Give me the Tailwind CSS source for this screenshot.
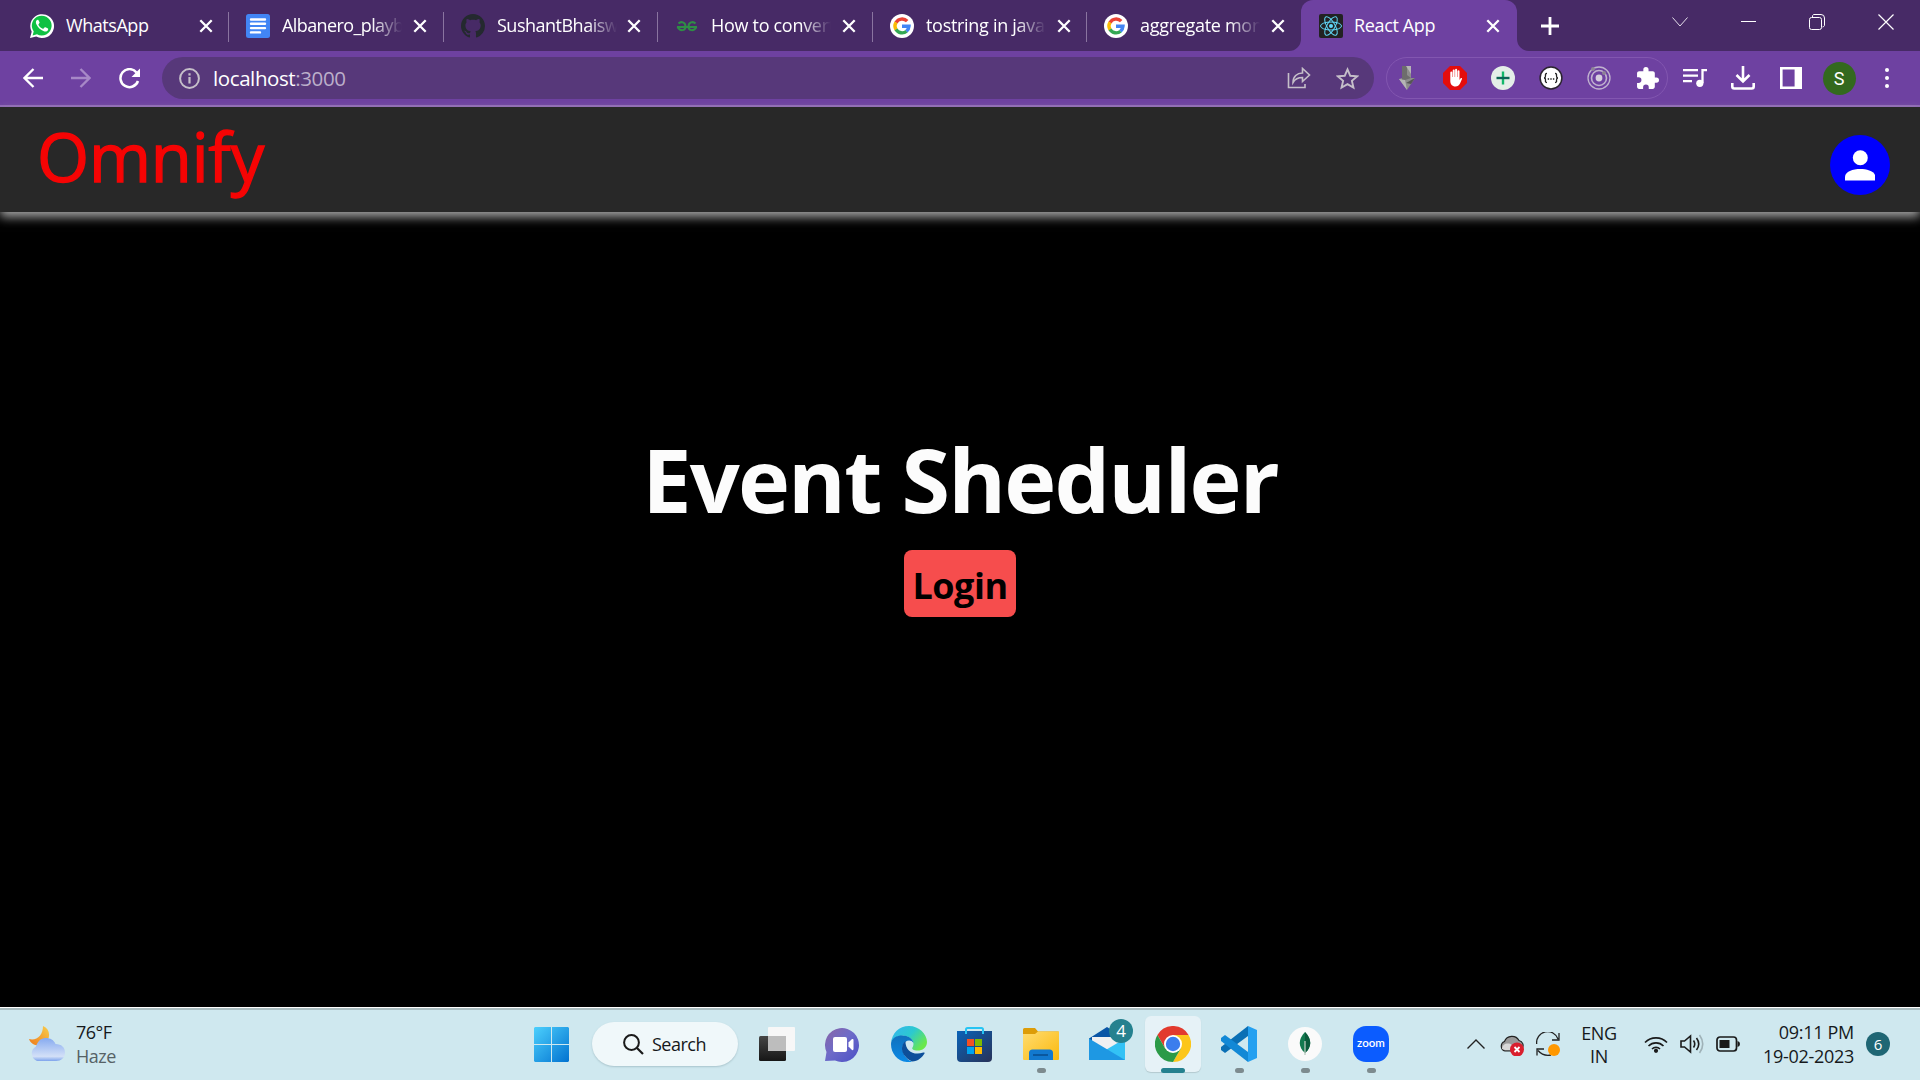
<!DOCTYPE html>
<html lang="en">
<head>
<meta charset="utf-8">
<title>React App</title>
<script src="https://cdn.jsdelivr.net/npm/@tailwindcss/browser@4"></script>
</head>
<body class="w-[1920px] h-[1080px] overflow-hidden bg-black font-['Open_Sans','Noto_Sans',sans-serif] flex flex-col">
<svg class="hidden">
  <symbol id="x" viewBox="0 0 14 14"><path d="M1.3 1.3 12.7 12.7M12.7 1.3 1.3 12.7" stroke="#fff" stroke-width="2.3"/></symbol>
  <symbol id="google" viewBox="0 0 24 24"><circle cx="12" cy="12" r="12" fill="#fff"/><g fill="none" stroke-width="3.4"><path d="M17.2 7.2A7 7 0 0 0 6 8.6" stroke="#ea4335"/><path d="M6 8.4a7 7 0 0 0 0 7.2" stroke="#fbbc05"/><path d="M6 15.4a7 7 0 0 0 10.6 1.8" stroke="#34a853"/><path d="M12 12.2h7a7 7 0 0 1-2.5 5" stroke="#4285f4"/></g></symbol>
</svg>

<!-- Tab strip -->
<div class="h-[51px] shrink-0 bg-[#472a66] flex text-white text-[18px] leading-[24px]">
  <div class="w-[14px] shrink-0"></div>
  <div class="w-[215px] shrink-0 flex items-center pl-4 relative border-r-0">
    <svg class="size-6 shrink-0" viewBox="0 0 24 24"><path d="M0 24l1.7-6.2A11.9 11.9 0 1 1 6.2 22.4z" fill="#fff"/><path d="M2.6 21.4l1.1-4A9.9 9.9 0 1 1 7 20.300z" fill="#0fc143"/><path d="M8.500 6.200c-.5-.8-1.200-.6-1.800 0-1 1-1 2.500-.3 4 1.400 3 4 5.700 7.500 7 1.900.7 3.800 0 4.200-1.500.2-.9.100-1-.6-1.400l-2-1c-.4-.2-.7-.1-1 .2l-.9 1.100c-.3.300-.5.300-.9.100-1.900-.8-3.200-2-4.200-3.800-.2-.4-.1-.6.200-.9l.7-.9c.2-.3.200-.5.100-.8z" fill="#fff"/></svg>
    <span class="ml-3 w-[121px] pb-0.5 overflow-hidden whitespace-nowrap tracking-[-0.45px]">WhatsApp</span>
    <svg class="size-[14px] ml-3"><use href="#x"/></svg>
    <i class="absolute right-0 top-3 h-[30px] w-px bg-[#8a74a0]"></i>
  </div>
  <div class="w-[215px] shrink-0 flex items-center pl-[17px] relative">
    <svg class="size-6 shrink-0" viewBox="0 0 24 24"><rect width="24" height="24" rx="2.500" fill="#4285f4"/><path d="M5 5.500h14M5 9.800h14M5 14.100h14M5 18.400h9" stroke="#fff" stroke-width="2.400" stroke-linecap="round"/></svg>
    <span class="ml-3 w-[120px] pb-0.5 overflow-hidden whitespace-nowrap tracking-[-0.6px] mask-r-from-75% mask-r-to-100%">Albanero_playbook</span>
    <svg class="size-[14px] ml-[11px]"><use href="#x"/></svg>
    <i class="absolute right-0 top-3 h-[30px] w-px bg-[#8a74a0]"></i>
  </div>
  <div class="w-[214px] shrink-0 flex items-center pl-[17px] relative">
    <svg class="size-6 shrink-0" viewBox="0 0 16 16"><path fill="#24292f" d="M8 0C3.580 0 0 3.580 0 8c0 3.540 2.290 6.530 5.470 7.590.4.070.55-.17.55-.38 0-.19-.01-.82-.01-1.490-2.010.37-2.530-.49-2.690-.94-.09-.23-.48-.94-.82-1.130-.28-.15-.68-.52-.01-.53.63-.01 1.080.58 1.230.82.72 1.210 1.870.87 2.330.66.07-.52.28-.87.51-1.070-1.780-.2-3.640-.89-3.640-3.950 0-.87.31-1.590.82-2.150-.08-.2-.36-1.020.08-2.120 0 0 .67-.21 2.200.82.64-.18 1.320-.27 2-.27s1.360.09 2 .27c1.530-1.040 2.200-.82 2.200-.82.44 1.100.16 1.920.08 2.120.51.56.82 1.270.82 2.150 0 3.070-1.870 3.750-3.650 3.950.29.25.54.73.54 1.480 0 1.070-.01 1.930-.01 2.200 0 .21.15.46.55.38A8.010 8.010 0 0 0 16 8c0-4.420-3.580-8-8-8z"/></svg>
    <span class="ml-3 w-[120px] pb-0.5 overflow-hidden whitespace-nowrap tracking-[-0.5px] mask-r-from-75% mask-r-to-100%">SushantBhaiswar</span>
    <svg class="size-[14px] ml-[10px]"><use href="#x"/></svg>
    <i class="absolute right-0 top-3 h-[30px] w-px bg-[#8a74a0]"></i>
  </div>
  <div class="w-[215px] shrink-0 flex items-center pl-[17px] relative">
    <svg class="size-6 shrink-0" viewBox="0 0 24 24" fill="none" stroke="#2f8d46" stroke-width="2"><path d="M2 13h20M3.500 9.500C6 7 10.500 8 10.500 12.500S5 17.500 2.500 13M20.500 9.500C18 7 13.500 8 13.500 12.500s5.500 5 8 .5"/></svg>
    <span class="ml-3 w-[120px] pb-0.5 overflow-hidden whitespace-nowrap tracking-[-0.3px] mask-r-from-75% mask-r-to-100%">How to convert</span>
    <svg class="size-[14px] ml-[11px]"><use href="#x"/></svg>
    <i class="absolute right-0 top-3 h-[30px] w-px bg-[#8a74a0]"></i>
  </div>
  <div class="w-[214px] shrink-0 flex items-center pl-[17px] relative">
    <svg class="size-6 shrink-0"><use href="#google"/></svg>
    <span class="ml-3 w-[120px] pb-0.5 overflow-hidden whitespace-nowrap tracking-[-0.3px] mask-r-from-75% mask-r-to-100%">tostring in javascript</span>
    <svg class="size-[14px] ml-[11px]"><use href="#x"/></svg>
    <i class="absolute right-0 top-3 h-[30px] w-px bg-[#8a74a0]"></i>
  </div>
  <div class="w-[214px] shrink-0 flex items-center pl-[17px] relative">
    <svg class="size-6 shrink-0"><use href="#google"/></svg>
    <span class="ml-3 w-[120px] pb-0.5 overflow-hidden whitespace-nowrap tracking-[-0.3px] mask-r-from-75% mask-r-to-100%">aggregate mongo</span>
    <svg class="size-[14px] ml-[11px]"><use href="#x"/></svg>
  </div>
  <div class="w-[216px] shrink-0 flex items-center pl-[18px] bg-[#6e41a1] rounded-t-[12px] relative">
    <svg class="absolute -left-3 bottom-0 size-3" viewBox="0 0 12 12"><path d="M12 0v12H0A12 12 0 0 0 12 0" fill="#6e41a1"/></svg>
    <svg class="absolute -right-3 bottom-0 size-3" viewBox="0 0 12 12"><path d="M0 0v12h12A12 12 0 0 1 0 0" fill="#6e41a1"/></svg>
    <svg class="size-6 shrink-0" viewBox="0 0 24 24"><rect width="24" height="24" rx="2" fill="#222"/><g fill="none" stroke="#61dafb" stroke-width="1"><ellipse cx="12" cy="12" rx="10.500" ry="4"/><ellipse cx="12" cy="12" rx="10.500" ry="4" transform="rotate(60 12 12)"/><ellipse cx="12" cy="12" rx="10.500" ry="4" transform="rotate(120 12 12)"/></g><circle cx="12" cy="12" r="2" fill="#61dafb"/></svg>
    <span class="ml-[11px] w-[121px] pb-0.5 overflow-hidden whitespace-nowrap tracking-[-0.35px]">React App</span>
    <svg class="size-[14px] ml-[11px]"><use href="#x"/></svg>
  </div>
  <div class="w-[65px] flex items-center justify-center"><svg class="size-[18px]" viewBox="0 0 18 18"><path d="M9 0v18M0 9h18" stroke="#fff" stroke-width="2.800"/></svg></div>
  <div class="ml-auto flex h-[43px] items-center">
    <div class="w-[69px] flex justify-center"><svg class="w-4 h-[10px]" viewBox="0 0 16 10"><path d="M.5.5 8 9 15.500.5" fill="none" stroke="#e5dfea"/></svg></div>
    <div class="w-[68px] flex justify-center"><i class="w-[15px] h-px bg-white"></i></div>
    <div class="w-[69px] flex justify-center"><svg class="size-4" viewBox="0 0 16 16"><path d="M3.500 3.500V3A2.500 2.500 0 0 1 4.500.5H12A3.500 3.500 0 0 1 15.500 4v7.500a2.500 2.500 0 0 1-2 1.500" fill="none" stroke="#fff"/><rect x=".5" y="3.500" width="12" height="12" rx="2" fill="none" stroke="#fff"/></svg></div>
    <div class="w-[69px] flex justify-center"><svg class="size-4" viewBox="0 0 16 16"><path d="M.5.5l15 15M15.500.5l-15 15" stroke="#fff" stroke-width="1.200"/></svg></div>
  </div>
</div>

<!-- Toolbar -->
<div class="h-[56px] shrink-0 bg-[#6e41a1] border-b-2 border-[#9068b8] flex items-center pl-[9px]">
  <div class="w-12 flex justify-center"><svg class="size-5" viewBox="0 0 20 20"><path d="M20 10H1.500M10.500 1 1.500 10l9 9" fill="none" stroke="#fff" stroke-width="2.300"/></svg></div>
  <div class="w-12 flex justify-center"><svg class="size-5" viewBox="0 0 20 20"><path d="M0 10h18.500M9.500 1l9 9-9 9" fill="none" stroke="#a788c7" stroke-width="2.300"/></svg></div>
  <div class="w-12 flex justify-center"><svg class="size-[21px]" viewBox="0 0 21 21"><path d="M17.500 4.500A9 9 0 1 0 19 13" fill="none" stroke="#fff" stroke-width="2.500"/><path d="M21 .5V9h-8.500z" fill="#fff"/></svg></div>
  <div class="ml-[9px] w-[1212px] h-[42px] rounded-full bg-[#57387a] flex items-center">
    <svg class="ml-[17px] size-[21px]" viewBox="0 0 21 21"><circle cx="10.500" cy="10.500" r="9.400" fill="none" stroke="#c5bfc9" stroke-width="2"/><path d="M10.500 9v6.500M10.500 5.300v2.300" stroke="#c5bfc9" stroke-width="2.200"/></svg>
    <span class="ml-[13px] text-[20.500px] leading-[28px] text-white tracking-[-0.4px]">localhost<span class="text-[#bcafca]">:3000</span></span>
    <div class="ml-auto flex pr-[3px]">
      <div class="w-12 flex justify-center"><svg class="w-[24px] h-[22px]" viewBox="0 0 24 22" fill="none" stroke="#c5bfc9" stroke-width="1.600"><path d="M1.500 6v14.500H18V17"/><path d="M6 15.500C6 9.500 10 6 15.500 6V1.500L22.500 8l-7 6.500V10.500C11 10.500 8 12 6 15.500z"/></svg></div>
      <div class="w-12 flex justify-center"><svg class="size-[23px]" viewBox="0 0 24 24"><path d="m12 2.500 2.900 6.700 7.100.6-5.400 4.700 1.600 7-6.200-3.700-6.200 3.700 1.600-7L2 9.800l7.100-.6z" fill="none" stroke="#c5bfc9" stroke-width="2"/></svg></div>
    </div>
  </div>
  <div class="ml-3 w-[282px] h-[42px] rounded-full border border-[#8256b0] flex items-center justify-center">
    <div class="w-12 shrink-0 flex justify-center"><svg class="w-4 h-6" viewBox="0 0 16 24"><path d="M3 0h9v12h4L8 24 0 13l3-1z" fill="#8d8d8d"/><path d="M3 0h5v9l4 3-9 3z" fill="#6d6d6d"/><path d="M0 13l6 1 2 10zM7 0l5 8V0z" fill="#b5b5b5"/><path d="M16 12l-9 5 5 1z" fill="#555"/></svg></div>
    <div class="w-12 shrink-0 flex justify-center"><svg class="size-6" viewBox="0 0 24 24"><path d="M7 0h10l7 7v10l-7 7H7l-7-7V7z" fill="#e40d0d"/><path d="M7.300 13V6.500a1 1 0 0 1 2 0V11h.4V4.500a1 1 0 0 1 2 0V11h.4V3.800a1 1 0 0 1 2 0V11h.4V5.300a1 1 0 0 1 2 0V14l1-1.600c.6-.8 1.800-.4 1.500.6L17 17.500C16 19.500 14.500 20.500 12.500 20.500 9 20.500 7.300 18 7.300 15z" fill="#fff"/></svg></div>
    <div class="w-12 shrink-0 flex justify-center"><svg class="size-6" viewBox="0 0 24 24"><circle cx="12" cy="12" r="12" fill="#e4eee8"/><path d="M12 5.500v13" stroke="#12b76a" stroke-width="2.400"/><path d="M5.500 12h13" stroke="#0b6555" stroke-width="2.400"/></svg></div>
    <div class="w-12 shrink-0 flex justify-center"><svg class="size-6" viewBox="0 0 24 24"><circle cx="12" cy="12" r="10.900" fill="#fff" stroke="#2b2430" stroke-width="1.500"/><path d="M8 7.500c-2 0-1.500 1-1.500 2.500S6 12 5 12c1 0 1.500.5 1.500 2s-.5 2.500 1.500 2.500M16 7.500c2 0 1.500 1 1.500 2.500s.5 2 1.500 2c-1 0-1.500.5-1.500 2s.5 2.500-1.500 2.500M8.700 13h1.400M11.300 13h1.400M13.900 13h1.400" fill="none" stroke="#222" stroke-width="1.300"/></svg></div>
    <div class="w-12 shrink-0 flex justify-center"><svg class="size-6" viewBox="0 0 24 24" fill="none" stroke="#c0b2cf" stroke-width="1.300"><circle cx="12" cy="12" r="11"/><circle cx="12" cy="12" r="7.500" stroke-width="1.600"/><circle cx="12" cy="12" r="3.400" fill="#d6cfdd" stroke="none"/><g fill="#8d8296" stroke="none"><circle cx="6" cy="3" r="2"/><circle cx="17" cy="7" r="2"/></g></svg></div>
    <div class="w-12 shrink-0 flex justify-center"><svg class="size-[23px]" viewBox="1 1 22 22"><path d="M20.500 11H19V7c0-1.100-.9-2-2-2h-4V3.500a2.500 2.500 0 0 0-5 0V5H4c-1.100 0-2 .9-2 2v3.800h1.500a2.700 2.700 0 0 1 0 5.400H2V20c0 1.100.9 2 2 2h3.800v-1.500a2.700 2.700 0 0 1 5.400 0V22H17c1.100 0 2-.9 2-2v-4h1.500a2.500 2.500 0 0 0 0-5z" fill="#fff"/></svg></div>
  </div>
  <div class="ml-[3px] flex items-center">
    <div class="w-12 flex justify-center"><svg class="w-6 h-5" viewBox="0 0 24 20"><path d="M0 2.200h15M0 7.700h15M0 13.200h9M19.500 15V2.200H24" fill="none" stroke="#fff" stroke-width="2.300"/><circle cx="16.800" cy="15.300" r="3.600" fill="#fff"/></svg></div>
    <div class="w-12 flex justify-center"><svg class="size-6" viewBox="0 0 24 24" fill="none" stroke="#fff" stroke-width="2.600"><path d="M12 0v15.500M5.500 9l6.500 6.500L18.500 9M1.300 17v3.500q0 2 2 2h17.400q2 0 2-2V17"/></svg></div>
    <div class="w-12 flex justify-center"><svg class="size-[22px]" viewBox="0 0 22 22"><path d="M0 0h22v22H0zM2.600 2.600v16.800h12V2.600z" fill="#fff" fill-rule="evenodd"/></svg></div>
    <div class="w-12 flex justify-center"><div class="size-[33px] rounded-full bg-[#33691e] text-white font-[Roboto,sans-serif] text-[18px] pt-px flex items-center justify-center">S</div></div>
    <div class="w-12 flex flex-col items-center gap-[3.500px]"><i class="size-[4.500px] rounded-full bg-white"></i><i class="size-[4.500px] rounded-full bg-white"></i><i class="size-[4.500px] rounded-full bg-white"></i></div>
  </div>
</div>

<!-- App header -->
<header class="h-[105px] shrink-0 bg-[#282828] shadow-[0_5px_10px_#a5a5a5] flex items-center justify-between pl-[37px] pr-[30px] relative">
  <h1 class="text-[#f60404] text-[67px] leading-[90px] pb-[8px] font-medium tracking-[-0.2px] [-webkit-text-stroke:1.4px_#f60404]">Omnify</h1>
  <div class="size-[60px] mt-[11px] rounded-full bg-[#0000fe] flex items-center justify-center"><svg class="w-[30px] h-[31px]" viewBox="0 0 30 31" fill="#fff"><circle cx="15.300" cy="7.700" r="7.500"/><path d="M0 30.500V27c0-5.500 8-8 15.200-8s15.200 2.500 15.200 8v3.500z"/></svg></div>
</header>

<!-- Page body -->
<main class="h-[795px] shrink-0 bg-black flex flex-col items-center pt-[207px]">
  <h2 class="text-[#fcfcfc] text-[88px] leading-[120px] h-[131px] font-bold tracking-[-1.8px] whitespace-nowrap">Event Sheduler</h2>
  <button class="w-[112px] h-[67px] rounded-[8px] bg-[#f64d4d] text-black text-[36px] leading-[48px] font-bold pt-[4px] tracking-[-0.500px] flex items-center justify-center">Login</button>
</main>

<!-- Taskbar -->
<footer class="h-[73px] shrink-0 bg-[#cfe8ef] border-t border-white flex text-[#16191c] text-[18px] leading-[24px]">
  <div class="w-full border-t-2 border-[#a9bcc0] flex items-center pb-[2px]">
    <div class="w-[518px] shrink-0 flex items-center pl-[28px]">
      <svg class="w-[38px] h-[38px]" viewBox="0 0 38 38"><defs><linearGradient id="mo" x1="0" y1="1" x2="1" y2="0"><stop stop-color="#ee7a1c"/><stop offset="1" stop-color="#f8cf4d"/></linearGradient><linearGradient id="cl" x1="0" y1="0" x2="0" y2="1"><stop stop-color="#86aaf0"/><stop offset=".8" stop-color="#d3e0f7"/><stop offset="1" stop-color="#7da3ec"/></linearGradient></defs><path d="M15 1c8 3 8 14 1 18C10 22 3 20 1 14c8 2 14-4 14-13z" fill="url(#mo)"/><path d="M9 36a8 8 0 0 1-1-14.500C10 15 14 13 18 13c4 0 8 2 9.500 6 6 0 9.500 3.500 9.500 8.500S33 36 28 36z" fill="url(#cl)"/></svg>
      <div class="ml-[10px] pb-px tracking-[-0.5px]"><div>76°F</div><div class="text-[#566266]">Haze</div></div>
    </div>
    <div class="w-[67px] shrink-0 flex justify-center"><svg class="size-[35px]" viewBox="0 0 35 35"><defs><linearGradient id="w" x1="0" y1="0" x2="1" y2="1"><stop stop-color="#4cd0fd"/><stop offset="1" stop-color="#0272d0"/></linearGradient></defs><path d="M1 0h16v17H0V1zM18 0h16l1 1v16H18zM0 18h17v17H1l-1-1zM18 18h17v16l-1 1H18z" fill="url(#w)"/></svg></div>
    <div class="ml-[7px] w-[146px] h-11 shrink-0 rounded-full bg-[#f0f8fa] shadow-[0_1px_2px_#a9c4cc] flex items-center pl-[31px]">
      <svg class="size-[21px]" viewBox="0 0 21 21"><path d="M13.500 13.500 20 20" stroke="#1a1a1a" stroke-width="2.200"/><circle cx="8.500" cy="8.500" r="7.400" fill="none" stroke="#1a1a1a" stroke-width="2"/></svg>
      <span class="ml-2 tracking-[-0.5px]">Search</span>
    </div>
    <div class="ml-[6px] w-[66px] shrink-0 flex justify-center"><svg class="size-9" viewBox="0 0 36 36"><defs><linearGradient id="tv" x1="0" y1="0" x2="0" y2="1"><stop stop-color="#464646"/><stop offset="1" stop-color="#161616"/></linearGradient></defs><rect y="10" width="27" height="25" rx="1.500" fill="url(#tv)"/><rect x="9" y="1" width="27" height="24" rx="1" fill="#f7f7f7"/><path d="M9 10h18v15H9z" fill="#bdbdbd"/></svg></div>
    <div class="w-[66px] shrink-0 flex justify-center pr-px"><svg class="size-[35px]" viewBox="0 0 35 35"><defs><linearGradient id="ch" x1="0" y1="0" x2="1" y2="1"><stop stop-color="#8a65a5"/><stop offset=".45" stop-color="#6e6bc8"/><stop offset="1" stop-color="#4b50c6"/></linearGradient></defs><path d="M0 34l1.500-9A17 17 0 1 1 10 33.500z" fill="url(#ch)"/><rect x="8" y="10" width="14" height="15" rx="2" fill="#fff"/><path d="M23.500 15.500l3.500-3.500q1.500-.5 1.500 1v9q0 1.500-1.500 1l-3.500-3.500z" fill="#fff"/></svg></div>
    <div class="w-[66px] shrink-0 flex justify-center"><svg class="size-9" viewBox="0 0 36 36"><defs><linearGradient id="e1" x1="0" y1="0" x2="1" y2=".6"><stop stop-color="#35b4f2"/><stop offset=".55" stop-color="#2cc9cf"/><stop offset="1" stop-color="#6ae84c"/></linearGradient><linearGradient id="e2" x1="0" y1="0" x2="0" y2="1"><stop stop-color="#1170bd"/><stop offset="1" stop-color="#0b8ae6"/></linearGradient></defs><path d="M0 17C1 7 8 0 18 0s18 8 18 16c0 6-5 8.500-9 8.500-5 0-6.500-1.500-5.500-3C24 18 22 11 14 10 7 9 1 13 0 17z" fill="url(#e1)"/><path d="M0 18C0 12 6 9.500 11 9.500c6 0 11 3 11.500 7.500C20 13 14 14 12 19c-2 6 2 14 9 16.700C9 38 0 29 0 18z" fill="url(#e2)"/><path d="M14.500 15c-5 4-6 14 6.500 20.500 6 0 10.500-4.500 12.500-8 .5-1-.5-1.300-1.200-1C23 30 14 25 14.500 15z" fill="#0d4f9a"/></svg></div>
    <div class="w-[66px] shrink-0 flex justify-center pr-px"><svg class="size-[35px]" viewBox="0 0 35 35"><defs><linearGradient id="st" x1="0" y1="0" x2="1" y2="1"><stop stop-color="#0a63b8"/><stop offset="1" stop-color="#283258"/></linearGradient></defs><path d="M0 4h35v27q0 4-4 4H4q-4 0-4-4z" fill="url(#st)"/><path d="M9 7V2.500Q9 1 10.500 1h14Q26 1 26 2.500V7" fill="none" stroke="#27c4f3" stroke-width="2"/><path d="M10 12h7v7h-7z" fill="#f35022"/><path d="M18 12h7v7h-7z" fill="#7fba00"/><path d="M10 20h7v7h-7z" fill="#00a4ef"/><path d="M18 20h7v7h-7z" fill="#ffb900"/></svg></div>
    <div class="w-[66px] shrink-0 flex justify-center relative"><svg class="size-9" viewBox="0 0 36 36"><defs><linearGradient id="fo" x1="0" y1="0" x2="1" y2="1"><stop stop-color="#ffdc70"/><stop offset="1" stop-color="#fbb90e"/></linearGradient></defs><path d="M0 3.500Q0 2 1.500 2H12l3 3.500h20q1 0 1 1V12H0z" fill="#dd9c08"/><path d="M0 8h12l3-2.500h21V33q0 1-1 1H1q-1 0-1-1z" fill="url(#fo)"/><path d="M6 34v-7q0-3.500 3.500-3.500h17Q30 23.500 30 27v7z" fill="#1279cf"/><path d="M10 29h15" stroke="#0a4f92" stroke-width="1.600"/></svg><i class="absolute top-[42px] left-[29px] w-[9px] h-[5px] rounded-full bg-[#7d8b8f]"></i></div>
    <div class="w-[66px] shrink-0 flex justify-center relative"><svg class="size-9" viewBox="0 0 36 36"><path d="M0 12.500 18 1l18 11.500V20H0z" fill="#0a55a6"/><path d="M3 11h30v12L18 27 3 16z" fill="#f0f0f2"/><path d="M36 12.500V34H0z" fill="#33c2f5"/><path d="M0 12.500 36 34H0z" fill="#1e98e3"/></svg><i class="absolute -top-[7px] left-[35px] size-6 rounded-full bg-[#25818f] text-white not-italic text-center text-[17px]">4</i></div>
    <div class="w-[66px] shrink-0 flex justify-center"><div class="w-14 h-14 rounded-[6px] bg-[#e6f2f7] shadow-[0_1px_1px_#b3c9cf] flex items-center justify-center relative"><svg class="size-9" viewBox="0 0 36 36"><path d="M2.400 9A18 18 0 0 1 33.600 9H18L10.200 22.500z" fill="#e23a2e"/><path d="M33.600 9A18 18 0 0 1 18 36l7.800-13.500L18 9z" fill="#fcc61a"/><path d="M18 36A18 18 0 0 1 2.400 9l7.800 13.500H25.800z" fill="#2b9a47"/><circle cx="18" cy="18" r="9" fill="#fff"/><circle cx="18" cy="18" r="7.200" fill="#3b7ded"/></svg><i class="absolute -bottom-px left-4 w-6 h-[5px] rounded-full bg-[#25818f]"></i></div></div>
    <div class="w-[66px] shrink-0 flex justify-center relative"><svg class="size-9" viewBox="0 0 36 36"><path d="M27 0v10L4 27 0 24v-3z" fill="#0a6fb5"/><path d="M0 12l4-3 23 17v10L0 15z" fill="#1288d6"/><path d="M27 0l9 4v28l-9 4z" fill="#25a0f0"/></svg><i class="absolute top-[42px] left-[29px] w-[9px] h-[5px] rounded-full bg-[#7d8b8f]"></i></div>
    <div class="w-[66px] shrink-0 flex justify-center relative"><svg class="size-9" viewBox="0 0 36 36"><circle cx="18" cy="18" r="17" fill="#fafafa"/><path d="M18 6c7 7 7 15 0 21-7-6-7-14 0-21z" fill="#12794f"/><path d="M18 6c7 7 7 15 0 21z" fill="#0b5b3c"/><path d="M18 15v14" stroke="#b9c9be" stroke-width="1.300"/></svg><i class="absolute top-[42px] left-[29px] w-[9px] h-[5px] rounded-full bg-[#7d8b8f]"></i></div>
    <div class="w-[66px] shrink-0 flex justify-center relative"><div class="size-9 rounded-[13px] bg-[#0b5cff] text-white text-[11.500px] leading-[34px] text-center font-semibold font-[Lato,sans-serif]">zoom</div><i class="absolute top-[42px] left-[29px] w-[9px] h-[5px] rounded-full bg-[#7d8b8f]"></i></div>
    <!-- System tray -->
    <svg class="ml-[63px] w-[18px] h-[10px] shrink-0" viewBox="0 0 18 10"><path d="M.5 9.500 9 1l8.500 8.500" fill="none" stroke="#222" stroke-width="1.400"/></svg>
    <svg class="ml-[15px] size-6 shrink-0" viewBox="0 0 24 24"><path d="M5 19a5 5 0 0 1-.5-9.500A8 8 0 0 1 19 8.500a5 5 0 0 1 3 8L20 19z" fill="#999" stroke="#222" stroke-width="1.200"/><path d="M2 17c0-5 6-7 10-4l3 5H5z" fill="#d8d8d8"/><circle cx="17" cy="17.500" r="7" fill="#d91f2d"/><path d="m14.500 15 5 5m0-5-5 5" stroke="#fff" stroke-width="1.800"/></svg>
    <svg class="ml-3 size-6 shrink-0" viewBox="0 0 24 24"><path d="M.7 12A11 11 0 0 1 22 7M23 1v7h-7M1 23.500V17h7M2 18.500q5 6 13 4.500" fill="none" stroke="#222" stroke-width="1.300"/><circle cx="18" cy="18" r="6" fill="#ff9800"/></svg>
    <div class="w-[80px] shrink-0 text-center leading-[23px] pt-px pr-0.5 tracking-[-0.300px]">ENG<br>IN</div>
    <svg class="ml-[4px] w-6 h-[18px] shrink-0" viewBox="0 0 24 18" fill="none" stroke="#1a1a1a" stroke-width="1.600"><path d="M1 7.500a15.500 15.500 0 0 1 22 0M4.500 11a10.600 10.600 0 0 1 15 0M8 14a5.700 5.700 0 0 1 8 0"/><circle cx="12" cy="15.800" r="1.300" fill="#1a1a1a"/></svg>
    <svg class="ml-3 w-6 h-5 shrink-0" viewBox="0 0 24 20" fill="none" stroke="#1a1a1a" stroke-width="1.600"><path d="M1 7v6h3.500l6 5V2l-6 5zM13.500 6.500q2.500 3.500 0 7M16.500 4q4.500 6 0 12"/><path d="M19.500 1q6.500 9 0 18" stroke="#9fb2b8"/></svg>
    <svg class="ml-3 w-6 h-4 shrink-0" viewBox="0 0 24 16"><rect x="1" y="1" width="19.500" height="14" rx="3" fill="none" stroke="#1a1a1a" stroke-width="1.700"/><rect x="3.500" y="4" width="10" height="8" fill="#1a1a1a"/><path d="M21.500 5q2.500.5 2.500 3t-2.500 3z" fill="#1a1a1a"/></svg>
    <div class="w-[114px] shrink-0 pb-px text-right whitespace-nowrap tracking-[-0.300px]">09:11 PM<br>19-02-2023</div>
    <div class="ml-3 size-6 shrink-0 rounded-full bg-[#1f6674] text-white text-center text-[15px]">6</div>
  </div>
</footer>
</body>
</html>
